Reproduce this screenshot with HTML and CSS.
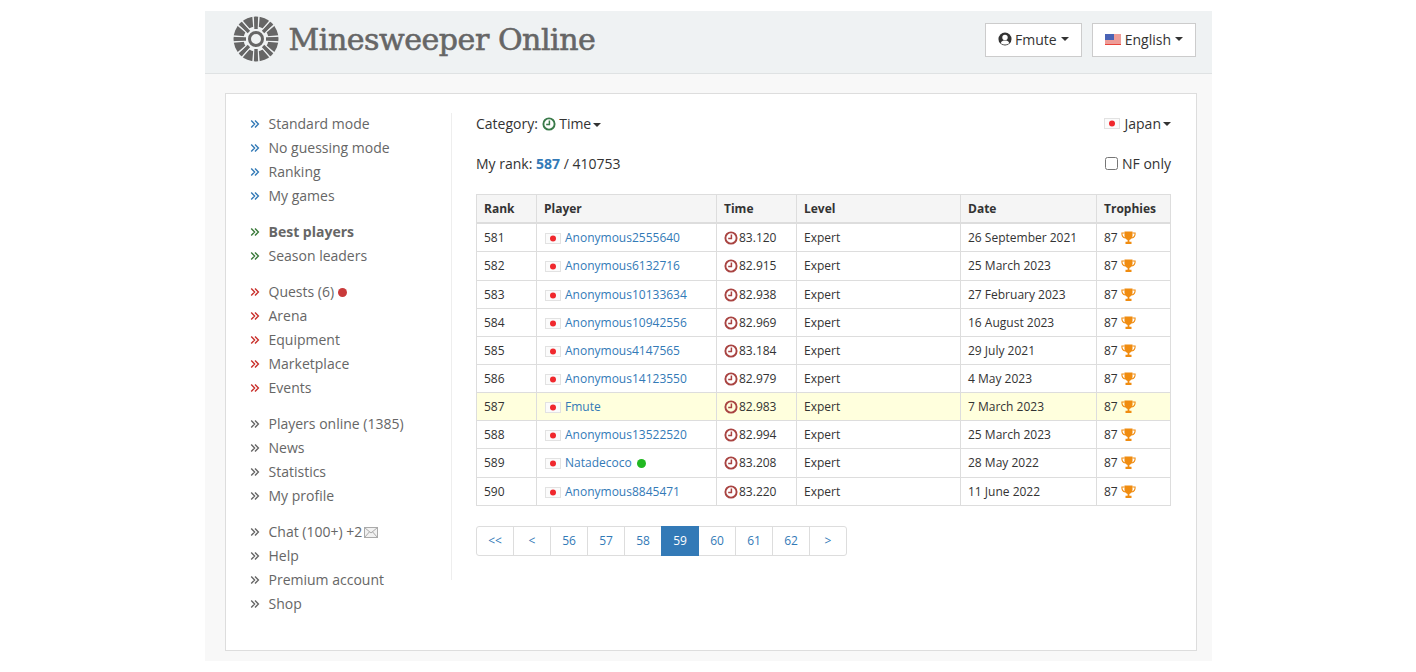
FILE: index.html
```html
<!DOCTYPE html>
<html lang="en">
<head>
    <meta charset="UTF-8">
    <title>Minesweeper Online</title>
    <link rel="stylesheet" href="styles.css">
</head>
<body>

<svg class="defs" width="0" height="0">
    <symbol id="chev" viewBox="0 0 10 10">
        <path d="M1.2 1.5 L4.6 5 L1.2 8.5 M5 1.5 L8.4 5 L5 8.5" fill="none" stroke="currentColor" stroke-width="1.4"/>
    </symbol>
    <symbol id="clock" viewBox="0 0 14 14">
        <circle cx="7" cy="7" r="5.6" fill="none" stroke="currentColor" stroke-width="1.9"/>
        <path d="M7.4 3.4 V7.6 H4.2" fill="none" stroke="currentColor" stroke-width="1.5"/>
    </symbol>
    <symbol id="trophy" viewBox="0 0 15 14">
        <path d="M3.5 0.5 H11.5 V5 C11.5 7.5 9.5 8.6 8.4 9 V10.8 H10.5 V13 H4.5 V10.8 H6.6 V9 C5.5 8.6 3.5 7.5 3.5 5 Z" fill="currentColor"/>
        <path d="M3.6 2 H0.9 C0.7 5 2 6.5 4.4 7 M11.4 2 H14.1 C14.3 5 13 6.5 10.6 7" fill="none" stroke="currentColor" stroke-width="1.1"/>
    </symbol>
    <symbol id="jp" viewBox="0 0 16 11">
        <rect width="16" height="11" fill="#f3f3f3"/>
        <rect x="0.5" y="0.5" width="15" height="10" fill="#fbfbfb" stroke="#e2e2e2"/>
        <circle cx="8" cy="5.5" r="3" fill="#f0282d"/>
    </symbol>
</svg>

<div class="page">
    <header class="top">
        <div class="brand">
            <svg class="logo" viewBox="0 0 46 46" width="46" height="46">
                <circle cx="23" cy="23" r="22.5" fill="#666"/>
                <g stroke="#eff2f3" stroke-width="1.5">
                    <path d="M20 0 L21 12 M26 0 L25 12"/>
                    <path d="M20 0 L21 12 M26 0 L25 12" transform="rotate(45 23 23)"/>
                    <path d="M20 0 L21 12 M26 0 L25 12" transform="rotate(90 23 23)"/>
                    <path d="M20 0 L21 12 M26 0 L25 12" transform="rotate(135 23 23)"/>
                    <path d="M20 0 L21 12 M26 0 L25 12" transform="rotate(180 23 23)"/>
                    <path d="M20 0 L21 12 M26 0 L25 12" transform="rotate(225 23 23)"/>
                    <path d="M20 0 L21 12 M26 0 L25 12" transform="rotate(270 23 23)"/>
                    <path d="M20 0 L21 12 M26 0 L25 12" transform="rotate(315 23 23)"/>
                </g>
                <circle cx="23" cy="23" r="12.5" fill="#eff2f3"/>
                <g stroke="#666" stroke-width="3.4">
                    <path d="M23 3 V13 M23 33 V43 M3 23 H13 M33 23 H43"/>
                    <path d="M23 3 V13 M23 33 V43 M3 23 H13 M33 23 H43" transform="rotate(45 23 23)"/>
                </g>
                <circle cx="23" cy="23" r="6.5" fill="#eff2f3" stroke="#666" stroke-width="3"/>
            </svg>
            <span class="brand-name">Minesweeper Online</span>
        </div>
        <div class="top-btns">
            <button class="btn">
                <svg class="user-icon" width="14" height="14" viewBox="0 0 15 15">
                    <circle cx="7.5" cy="7.5" r="7" fill="#333"/>
                    <circle cx="7.5" cy="5.8" r="2.9" fill="#fff"/>
                    <path d="M2.9 12 C3.6 9.6 5.6 9.2 7.5 9.2 C9.4 9.2 11.4 9.6 12.1 12 C9.5 14 5.5 14 2.9 12 Z" fill="#fff"/>
                </svg>
                Fmute <span class="caret"></span>
            </button>
            <button class="btn">
                <svg width="16" height="11" viewBox="0 0 16 11">
                    <rect width="16" height="11" fill="#f4f4f4"/>
                    <path d="M0 1 H16 M0 3 H16 M0 5 H16 M0 7 H16 M0 9 H16" stroke="#e8463c" stroke-width="1"/>
                    <path d="M0 10.5 H16" stroke="#e8463c" stroke-width="1"/>
                    <rect width="9" height="6" fill="#4a63b5"/>
                </svg>
                English <span class="caret"></span>
            </button>
        </div>
    </header>

    <div class="main">
        <div class="card">
            <nav class="side">
                <ul class="nav blue">
                    <li><svg class="chev"><use href="#chev"/></svg>Standard mode</li>
                    <li><svg class="chev"><use href="#chev"/></svg>No guessing mode</li>
                    <li><svg class="chev"><use href="#chev"/></svg>Ranking</li>
                    <li><svg class="chev"><use href="#chev"/></svg>My games</li>
                </ul>
                <ul class="nav green">
                    <li class="on"><svg class="chev"><use href="#chev"/></svg>Best players</li>
                    <li><svg class="chev"><use href="#chev"/></svg>Season leaders</li>
                </ul>
                <ul class="nav red">
                    <li><svg class="chev"><use href="#chev"/></svg>Quests (6)<span class="dot dot-red"></span></li>
                    <li><svg class="chev"><use href="#chev"/></svg>Arena</li>
                    <li><svg class="chev"><use href="#chev"/></svg>Equipment</li>
                    <li><svg class="chev"><use href="#chev"/></svg>Marketplace</li>
                    <li><svg class="chev"><use href="#chev"/></svg>Events</li>
                </ul>
                <ul class="nav grey">
                    <li><svg class="chev"><use href="#chev"/></svg>Players online (1385)</li>
                    <li><svg class="chev"><use href="#chev"/></svg>News</li>
                    <li><svg class="chev"><use href="#chev"/></svg>Statistics</li>
                    <li><svg class="chev"><use href="#chev"/></svg>My profile</li>
                </ul>
                <ul class="nav grey">
                    <li>
                        <svg class="chev"><use href="#chev"/></svg>Chat (100+) +2
                        <svg class="mail" width="14" height="11" viewBox="0 0 14 11">
                            <rect x="0.5" y="0.5" width="13" height="10" fill="#f2f2f2" stroke="#aaa"/>
                            <path d="M0.5 0.5 L7 6 L13.5 0.5 M0.5 10.5 L5.5 4.8 M13.5 10.5 L8.5 4.8" fill="none" stroke="#aaa"/>
                        </svg>
                    </li>
                    <li><svg class="chev"><use href="#chev"/></svg>Help</li>
                    <li><svg class="chev"><use href="#chev"/></svg>Premium account</li>
                    <li><svg class="chev"><use href="#chev"/></svg>Shop</li>
                </ul>
            </nav>

            <section class="content">
                <div class="bar bar-cat">
                    <div>Category:
                        <svg class="clock-green" width="14" height="14"><use href="#clock"/></svg>
                        Time<span class="caret"></span>
                    </div>
                    <div class="country"><svg class="flag-big" width="16" height="11"><use href="#jp"/></svg>Japan<span class="caret"></span></div>
                </div>
                <div class="bar bar-rank">
                    <div>My rank: <b class="rank-num">587</b> / 410753</div>
                    <label class="nf"><input type="checkbox">NF only</label>
                </div>

                <table class="rank">
                    <thead>
                        <tr>
                            <th class="c-rank">Rank</th>
                            <th class="c-player">Player</th>
                            <th class="c-time">Time</th>
                            <th class="c-level">Level</th>
                            <th class="c-date">Date</th>
                            <th class="c-trophy">Trophies</th>
                        </tr>
                    </thead>
                    <tbody>
                        <tr><td>581</td><td><svg class="flag"><use href="#jp"/></svg><a>Anonymous2555640</a></td><td><svg class="clock"><use href="#clock"/></svg>83.120</td><td>Expert</td><td>26 September 2021</td><td>87 <svg class="cup"><use href="#trophy"/></svg></td></tr>
                        <tr><td>582</td><td><svg class="flag"><use href="#jp"/></svg><a>Anonymous6132716</a></td><td><svg class="clock"><use href="#clock"/></svg>82.915</td><td>Expert</td><td>25 March 2023</td><td>87 <svg class="cup"><use href="#trophy"/></svg></td></tr>
                        <tr><td>583</td><td><svg class="flag"><use href="#jp"/></svg><a>Anonymous10133634</a></td><td><svg class="clock"><use href="#clock"/></svg>82.938</td><td>Expert</td><td>27 February 2023</td><td>87 <svg class="cup"><use href="#trophy"/></svg></td></tr>
                        <tr><td>584</td><td><svg class="flag"><use href="#jp"/></svg><a>Anonymous10942556</a></td><td><svg class="clock"><use href="#clock"/></svg>82.969</td><td>Expert</td><td>16 August 2023</td><td>87 <svg class="cup"><use href="#trophy"/></svg></td></tr>
                        <tr><td>585</td><td><svg class="flag"><use href="#jp"/></svg><a>Anonymous4147565</a></td><td><svg class="clock"><use href="#clock"/></svg>83.184</td><td>Expert</td><td>29 July 2021</td><td>87 <svg class="cup"><use href="#trophy"/></svg></td></tr>
                        <tr><td>586</td><td><svg class="flag"><use href="#jp"/></svg><a>Anonymous14123550</a></td><td><svg class="clock"><use href="#clock"/></svg>82.979</td><td>Expert</td><td>4 May 2023</td><td>87 <svg class="cup"><use href="#trophy"/></svg></td></tr>
                        <tr class="me"><td>587</td><td><svg class="flag"><use href="#jp"/></svg><a>Fmute</a></td><td><svg class="clock"><use href="#clock"/></svg>82.983</td><td>Expert</td><td>7 March 2023</td><td>87 <svg class="cup"><use href="#trophy"/></svg></td></tr>
                        <tr><td>588</td><td><svg class="flag"><use href="#jp"/></svg><a>Anonymous13522520</a></td><td><svg class="clock"><use href="#clock"/></svg>82.994</td><td>Expert</td><td>25 March 2023</td><td>87 <svg class="cup"><use href="#trophy"/></svg></td></tr>
                        <tr><td>589</td><td><svg class="flag"><use href="#jp"/></svg><a>Natadecoco</a><span class="dot dot-green"></span></td><td><svg class="clock"><use href="#clock"/></svg>83.208</td><td>Expert</td><td>28 May 2022</td><td>87 <svg class="cup"><use href="#trophy"/></svg></td></tr>
                        <tr><td>590</td><td><svg class="flag"><use href="#jp"/></svg><a>Anonymous8845471</a></td><td><svg class="clock"><use href="#clock"/></svg>83.220</td><td>Expert</td><td>11 June 2022</td><td>87 <svg class="cup"><use href="#trophy"/></svg></td></tr>
                    </tbody>
                </table>

                <ul class="pager">
                    <li>&lt;&lt;</li>
                    <li>&lt;</li>
                    <li>56</li>
                    <li>57</li>
                    <li>58</li>
                    <li class="active">59</li>
                    <li>60</li>
                    <li>61</li>
                    <li>62</li>
                    <li>&gt;</li>
                </ul>
            </section>
        </div>
    </div>
</div>

</body>
</html>
```

FILE: styles.css
```css
/* Page frame */
body {
    margin: 0;
    background: #fff;
    color: #333;
    font-family: "Open Sans", sans-serif;
    font-size: 14px;
    line-height: 1.42857;
}
.defs {
    display: block;
    height: 0;
}
.page {
    width: 1007px;
    margin: 11px 0 0 205px;
    background: #f8f8f8;
}

/* Header */
.top {
    display: flex;
    justify-content: space-between;
    align-items: center;
    height: 63px;
    box-sizing: border-box;
    padding: 0 16px 4px 28px;
    background: #eff2f3;
    border-bottom: 1px solid #dfe2e3;
}
.brand {
    display: flex;
    align-items: center;
    margin-bottom: 2px;
}
.logo {
    margin-right: 9.5px;
}
.brand-name {
    padding-top: 2px;
    font-family: "DejaVu Serif", serif;
    font-size: 30px;
    color: #666;
    letter-spacing: -0.45px;
    -webkit-text-stroke: 0.6px #666;
}
.top-btns {
    display: flex;
    gap: 10px;
}
.btn {
    display: flex;
    align-items: center;
    gap: 4px;
    height: 34px;
    padding: 0 12px 2px;
    background: #fff;
    border: 1px solid #ccc;
    color: #333;
    font-family: inherit;
    font-size: 14px;
}
.user-icon {
    margin-right: -1px;
}
.caret {
    display: inline-block;
    width: 0;
    height: 0;
    vertical-align: middle;
    border-top: 4px solid #333;
    border-left: 4px solid transparent;
    border-right: 4px solid transparent;
}
.bar .caret {
    margin-left: 2px;
}

/* Card */
.main {
    padding: 19px 15px 10px 20px;
}
.card {
    display: flex;
    align-items: flex-start;
    height: 558px;
    box-sizing: border-box;
    padding: 18px 25px 0 24px;
    background: #fff;
    border: 1px solid #ddd;
}

/* Side menu */
.side {
    width: 201px;
    flex: none;
    color: #666;
}
.nav {
    list-style: none;
    margin: 0 0 12px;
    padding: 0;
}
.nav li {
    display: flex;
    align-items: center;
    height: 24px;
}
.chev {
    width: 10px;
    height: 10px;
    margin-right: 8.5px;
    flex: none;
}
.blue .chev { color: #337ab7; }
.green .chev { color: #3a7a3a; }
.red .chev { color: #c9302c; }
.grey .chev { color: #666; }
.on {
    font-weight: bold;
}
.dot {
    display: inline-block;
    width: 9px;
    height: 9px;
    border-radius: 50%;
}
.dot-red {
    margin-left: 4px;
    background: #c93a3a;
}
.dot-green {
    margin-left: 5px;
    vertical-align: -1px;
    background: #21b821;
}
.mail {
    margin-left: 2px;
}

/* Ranking */
.content {
    flex: 1;
    min-width: 0;
    height: 467px;
    box-sizing: border-box;
    margin-top: 1px;
    padding: 1px 0 0 24px;
    border-left: 1px solid #eee;
}
.bar {
    display: flex;
    justify-content: space-between;
    align-items: center;
    height: 20px;
}
.bar-rank {
    margin-top: 20px;
    margin-bottom: 20px;
}
.clock-green {
    color: #3a7a4a;
    vertical-align: -2px;
}
.country {
    display: flex;
    align-items: center;
}
.flag-big {
    margin-right: 5px;
}
.rank-num {
    color: #337ab7;
}
.nf {
    display: flex;
    align-items: center;
}
.nf input {
    width: 13px;
    height: 13px;
    margin: 0 4px 0 0;
}

.rank {
    width: 694px;
    border-collapse: collapse;
    table-layout: fixed;
    font-size: 12px;
}
.rank th, .rank td {
    box-sizing: border-box;
    padding: 5px 7px;
    border: 1px solid #ddd;
    text-align: left;
}
.rank th {
    padding-bottom: 5.2px;
    background: #f5f5f5;
    border-bottom-width: 2px;
}
.rank a {
    color: #337ab7;
}
.rank .me td {
    background: #ffffdd;
}
.c-rank { width: 60px; }
.c-player { width: 180px; }
.c-time { width: 80px; }
.c-level { width: 164px; }
.c-date { width: 136px; }
.c-trophy { width: 74px; }
.flag {
    width: 16px;
    height: 11px;
    margin: 0 4px 0 1px;
    vertical-align: -2px;
}
.clock {
    width: 14px;
    height: 14px;
    margin-right: 1px;
    color: #a94442;
    vertical-align: -3px;
}
.cup {
    width: 15px;
    height: 14px;
    color: #f08c10;
    vertical-align: -3px;
}

/* Pager */
.pager {
    display: flex;
    list-style: none;
    width: max-content;
    margin: 19.8px 0 0;
    padding: 0;
    font-size: 12px;
    color: #337ab7;
}
.pager li {
    width: 38px;
    height: 30px;
    box-sizing: border-box;
    margin-left: -1px;
    border: 1px solid #ddd;
    line-height: 28px;
    text-align: center;
}
.pager li:first-child {
    margin-left: 0;
    border-radius: 3px 0 0 3px;
}
.pager li:last-child {
    border-radius: 0 3px 3px 0;
}
.pager .active {
    position: relative;
    z-index: 1;
    background: #337ab7;
    border-color: #337ab7;
    color: #fff;
}
```
